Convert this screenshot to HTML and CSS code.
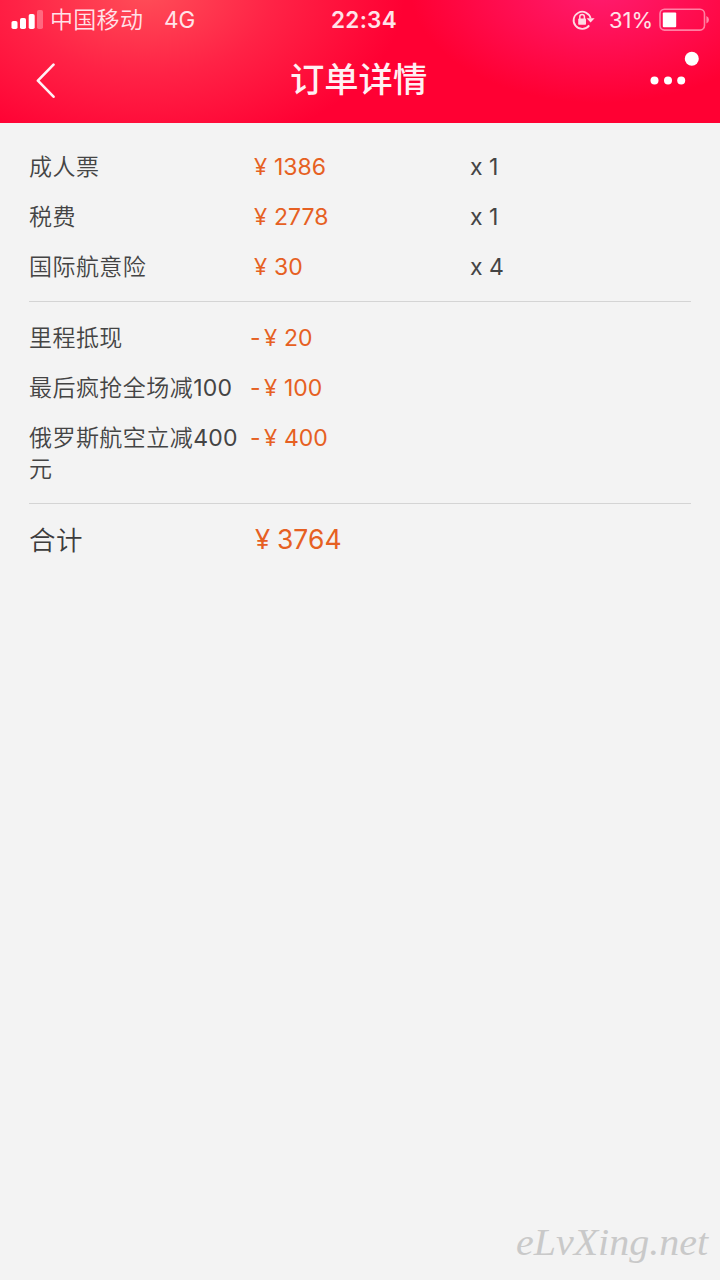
FILE: index.html
```html
<!DOCTYPE html>
<html lang="zh-CN">
<head>
<meta charset="utf-8">
<title>订单详情</title>
<link rel="stylesheet" href="styles.css">
</head>
<body>
<header class="header">
  <div class="status">
    <div class="status-left">
      <svg class="signal" width="32" height="20" viewBox="0 0 32 20" fill="#fff">
        <rect x="0.5" y="11" width="6" height="8" rx="1.8"/><rect x="9" y="8" width="6" height="11" rx="1.8"/><rect x="17.7" y="4" width="6" height="15" rx="1.8"/><rect x="26" y="0" width="6" height="19" rx="1.8" opacity=".3"/>
      </svg>
      <span class="carrier">中国移动</span><span class="network">4G</span>
    </div>
    <span class="clock">22:34</span>
    <div class="status-right">
      <svg class="lock" width="24" height="22" viewBox="0 0 24 22">
        <path d="M17.2 16.4A8.6 8.6 0 1 1 18.6 9.4" fill="none" stroke="#ffdbe3" stroke-width="1.8"/>
        <path d="M14.6 9.2H22.6L18.6 13.6Z" fill="#ffdbe3"/>
        <rect x="6.2" y="9.6" width="7.8" height="6.2" rx=".8" fill="#ffdbe3"/>
        <path d="M7.8 10.5V7.8a2.3 2.3 0 0 1 4.6 0V10.5" fill="none" stroke="#ffdbe3" stroke-width="1.5"/>
      </svg>
      <span class="percent">31%</span>
      <svg class="battery" width="52" height="24" viewBox="0 0 52 24">
        <rect x="1" y="1.3" width="44.5" height="20.8" rx="4.5" fill="none" stroke="#fff" stroke-opacity=".48" stroke-width="1.6"/>
        <rect x="3.8" y="4.4" width="13.4" height="14.8" rx="1" fill="#fff"/>
        <path d="M47.4 8q2.6 1 2.6 3.8t-2.6 3.8z" fill="#fff" opacity=".5"/>
      </svg>
    </div>
  </div>
  <nav class="nav">
    <svg class="back" width="22" height="36" viewBox="0 0 22 36"><path d="M18.5 1.7 2.9 17.7 18.5 33.7" fill="none" stroke="#fff1f4" stroke-width="2.6" stroke-linecap="round" stroke-linejoin="round"/></svg>
    <h1 class="title">订单详情</h1>
    <svg class="more" width="50" height="38" viewBox="0 0 50 38" fill="#fff"><circle cx="4.5" cy="30.5" r="4"/><circle cx="18" cy="30.5" r="4"/><circle cx="31.2" cy="30.5" r="4"/><circle cx="41.8" cy="8.7" r="7"/></svg>
  </nav>
</header>
<main class="bill">
  <section class="group fares">
    <div class="row"><span class="name">成人票</span><span class="price"><span class="yen">¥</span>1386</span><span class="qty">x 1</span></div>
    <div class="row"><span class="name">税费</span><span class="price"><span class="yen">¥</span>2778</span><span class="qty">x 1</span></div>
    <div class="row"><span class="name">国际航意险</span><span class="price"><span class="yen">¥</span>30</span><span class="qty">x 4</span></div>
  </section>
  <section class="group discounts">
    <div class="row"><span class="name">里程抵现</span><span class="price"><span class="minus">-</span><span class="yen">¥</span>20</span></div>
    <div class="row"><span class="name">最后疯抢全场减<span class="num">100</span></span><span class="price"><span class="minus">-</span><span class="yen">¥</span>100</span></div>
    <div class="row"><span class="name">俄罗斯航空立减<span class="num">400</span>元</span><span class="price"><span class="minus">-</span><span class="yen">¥</span>400</span></div>
  </section>
  <section class="total">
    <div class="row"><span class="name">合计</span><span class="price"><span class="yen">¥</span>3764</span></div>
  </section>
</main>
<footer class="footer"><svg width="206" height="58" viewBox="0 0 206 58"><text class="watermark" x="2" y="33" textLength="192" lengthAdjust="spacingAndGlyphs">eLvXing.net</text></svg></footer>
</body>
</html>
```
FILE: styles.css
```css
* { box-sizing: border-box; }
body {
  margin: 0;
  min-height: 1280px;
  display: flex;
  flex-direction: column;
  background: #f3f3f3;
  color: #444;
  font-family: Inter, "Noto Sans CJK SC", sans-serif;
}
svg { display: block; flex: none; }
.header {
  height: 123px;
  color: #ffe3e9;
  background:
    radial-gradient(ellipse 260px 165px at 145px -8px, rgba(255, 78, 88, 1), rgba(255, 46, 76, .75) 50%, rgba(255, 0, 51, 0) 100%),
    radial-gradient(ellipse 190px 115px at 600px -12px, rgba(255, 28, 112, 1), rgba(255, 0, 51, 0) 100%),
    #ff0033;
}
.status {
  height: 40px;
  display: grid;
  grid-template-columns: 331px 1fr 148px;
  align-items: center;
  font-size: 23px;
  line-height: 40px;
}
.status-left, .status-right { display: flex; align-items: center; }
.signal { margin-left: 11px; }
.carrier { margin-left: 7px; width: 114px; font-weight: 350; letter-spacing: .3px; }
.network { font-size: 22.5px; }
.clock { font-weight: 600; font-size: 22.5px; letter-spacing: .3px; }
.percent { width: 63px; padding-left: 13px; font-size: 22px; white-space: nowrap; }
.nav {
  height: 83px;
  display: grid;
  grid-template-columns: 290px 1fr 70px;
  align-items: start;
}
.back { margin: 23px 0 0 35px; }
.title { margin: 10px 0 0; font-size: 34.3px; line-height: 60px; font-weight: 500; color: #fff0f3; }
.more { margin-top: 10px; }
.bill { padding: 29px 29px 0; }
.group { border-bottom: 1px solid #d4d4d4; }
.fares .row:last-child { min-height: 49px; }
.discounts { padding-top: 21px; padding-bottom: 18px; }
.row {
  display: grid;
  grid-template-columns: 216px 225px 1fr;
  align-items: start;
  min-height: 50px;
  font-size: 23px;
  line-height: 31px;
}
.name { letter-spacing: .45px; word-break: break-all; font-weight: 350; }
.num { letter-spacing: .2px; font-weight: 400; }
.price { display: flex; align-items: baseline; color: #e66022; padding-left: 9px; }
.yen { width: 20px; font-family: "Noto Sans", sans-serif; line-height: 1; }
.minus { width: 14px; }
.discounts .price { padding-left: 5px; }
.discounts .row:last-child { min-height: 62px; }
.total { padding-top: 20px; color: #3c3c3c; }
.total .row { font-size: 26.5px; line-height: 32px; }
.total .yen { width: 22px; }
.total .price { padding-left: 10px; line-height: 31px; }
.footer { margin-top: auto; display: flex; justify-content: flex-end; }
.watermark { font-family: "Liberation Serif", serif; font-size: 37px; font-style: italic; fill: #c9c9c9; }
```
